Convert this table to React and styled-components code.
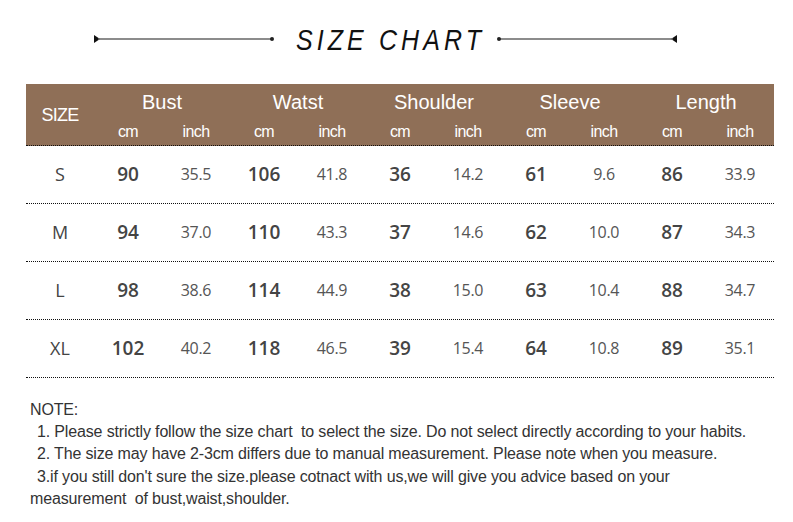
import React from "react";
import styled, { createGlobalStyle } from "styled-components";

const Global = createGlobalStyle`
  body {
    margin: 0;
    background: #fff;
    font-family: "Liberation Sans", Arial, sans-serif;
  }
`;

const Page = styled.div`
  width: 793px;
  height: 522px;
  background: #fff;
  overflow: hidden;
`;

const TitleBar = styled.div`
  height: 84px;
  display: flex;
  align-items: center;
  justify-content: center;
  padding: 0 22px 6px 0;
  box-sizing: border-box;
`;

const Title = styled.h1`
  margin: 0;
  width: 221px;
  padding-left: 10px;
  box-sizing: border-box;
  font-family: "Liberation Sans", Arial, sans-serif;
  font-weight: 400;
  font-style: italic;
  font-size: 25px;
  letter-spacing: 4.1px;
  color: #111;
  text-align: center;
  transform: scaleY(1.18);
`;

const Rule = ({ flip }) => (
  <svg width="182" height="12" viewBox="0 0 182 12" style={{ transform: flip ? "scaleX(-1)" : "none" }}>
    <path d="M1 2 L7 6 L1 10 Z" fill="#111" />
    <line x1="5" y1="6" x2="178" y2="6" stroke="#666" strokeWidth="1.4" />
    <circle cx="179" cy="6" r="2" fill="#222" />
  </svg>
);

const Table = styled.div`
  margin-left: 26px;
  width: 748px;
`;

const Head = styled.div`
  display: grid;
  grid-template-columns: repeat(11, 68px);
  grid-template-rows: 32px 29px;
  background: #8f6f57;
  color: #fff;
  border-bottom: 1px dotted #111;
`;

const SizeHead = styled.div`
  grid-row: 1 / span 2;
  display: flex;
  align-items: center;
  justify-content: center;
  font-size: 18px;
  letter-spacing: -0.8px;
  padding-top: 1px;
`;

const GroupHead = styled.div`
  grid-column: span 2;
  display: flex;
  align-items: flex-end;
  justify-content: center;
  font-size: 20px;
  padding-bottom: 2px;
`;

const Unit = styled.div`
  display: flex;
  align-items: center;
  justify-content: center;
  font-size: 16px;
  letter-spacing: -0.6px;
  padding-top: 3px;
`;

const Row = styled.div`
  display: grid;
  grid-template-columns: repeat(11, 68px);
  height: 58px;
  align-items: center;
  border-bottom: 1px dotted #111;
  box-sizing: border-box;
  font-family: "Open Sans", "Noto Sans", sans-serif;
`;

const Cell = styled.div`
  text-align: center;
  padding-bottom: 2px;
  font-size: ${p => (p.$kind === "inch" ? "16px" : "19px")};
  font-weight: ${p => (p.$kind === "cm" ? 600 : 400)};
  color: ${p => (p.$kind === "inch" ? "#555" : p.$kind === "cm" ? "#444" : "#333")};
  letter-spacing: ${p => (p.$kind === "inch" ? "-0.3px" : "0")};
  ${p => p.$kind === "size" && "font-size: 18px; font-weight: 400; color: #444;"}
`;

const Notes = styled.div`
  margin-top: 21px;
  padding-left: 30px;
  font-size: 16px;
  line-height: 22.2px;
  letter-spacing: -0.15px;
  color: #333;
  p {
    margin: 0;
  }
`;

const Item = styled.p`
  padding-left: 7px;
`;

const groups = ["Bust", "Watst", "Shoulder", "Sleeve", "Length"];

const rows = [
  ["S", 90, "35.5", 106, "41.8", 36, "14.2", 61, "9.6", 86, "33.9"],
  ["M", 94, "37.0", 110, "43.3", 37, "14.6", 62, "10.0", 87, "34.3"],
  ["L", 98, "38.6", 114, "44.9", 38, "15.0", 63, "10.4", 88, "34.7"],
  ["XL", 102, "40.2", 118, "46.5", 39, "15.4", 64, "10.8", 89, "35.1"],
];

export default function App() {
  return (
    <Page>
      <Global />
      <TitleBar>
        <Rule />
        <Title>SIZE CHART</Title>
        <Rule flip />
      </TitleBar>
      <Table>
        <Head>
          <SizeHead>SIZE</SizeHead>
          {groups.map(g => (
            <GroupHead key={g}>{g}</GroupHead>
          ))}
          {groups.map(g => (
            <React.Fragment key={g}>
              <Unit>cm</Unit>
              <Unit>inch</Unit>
            </React.Fragment>
          ))}
        </Head>
        {rows.map(r => (
          <Row key={r[0]}>
            {r.map((v, i) => (
              <Cell key={i} $kind={i === 0 ? "size" : i % 2 ? "cm" : "inch"}>
                {v}
              </Cell>
            ))}
          </Row>
        ))}
      </Table>
      <Notes>
        <p>NOTE:</p>
        <Item>1. Please strictly follow the size chart&nbsp; to select the size. Do not select directly according to your habits.</Item>
        <Item>2. The size may have 2-3cm differs due to manual measurement. Please note when you measure.</Item>
        <Item>3.if you still don't sure the size.please cotnact with us,we will give you advice based on your</Item>
        <p>measurement&nbsp; of bust,waist,shoulder.</p>
      </Notes>
    </Page>
  );
}
